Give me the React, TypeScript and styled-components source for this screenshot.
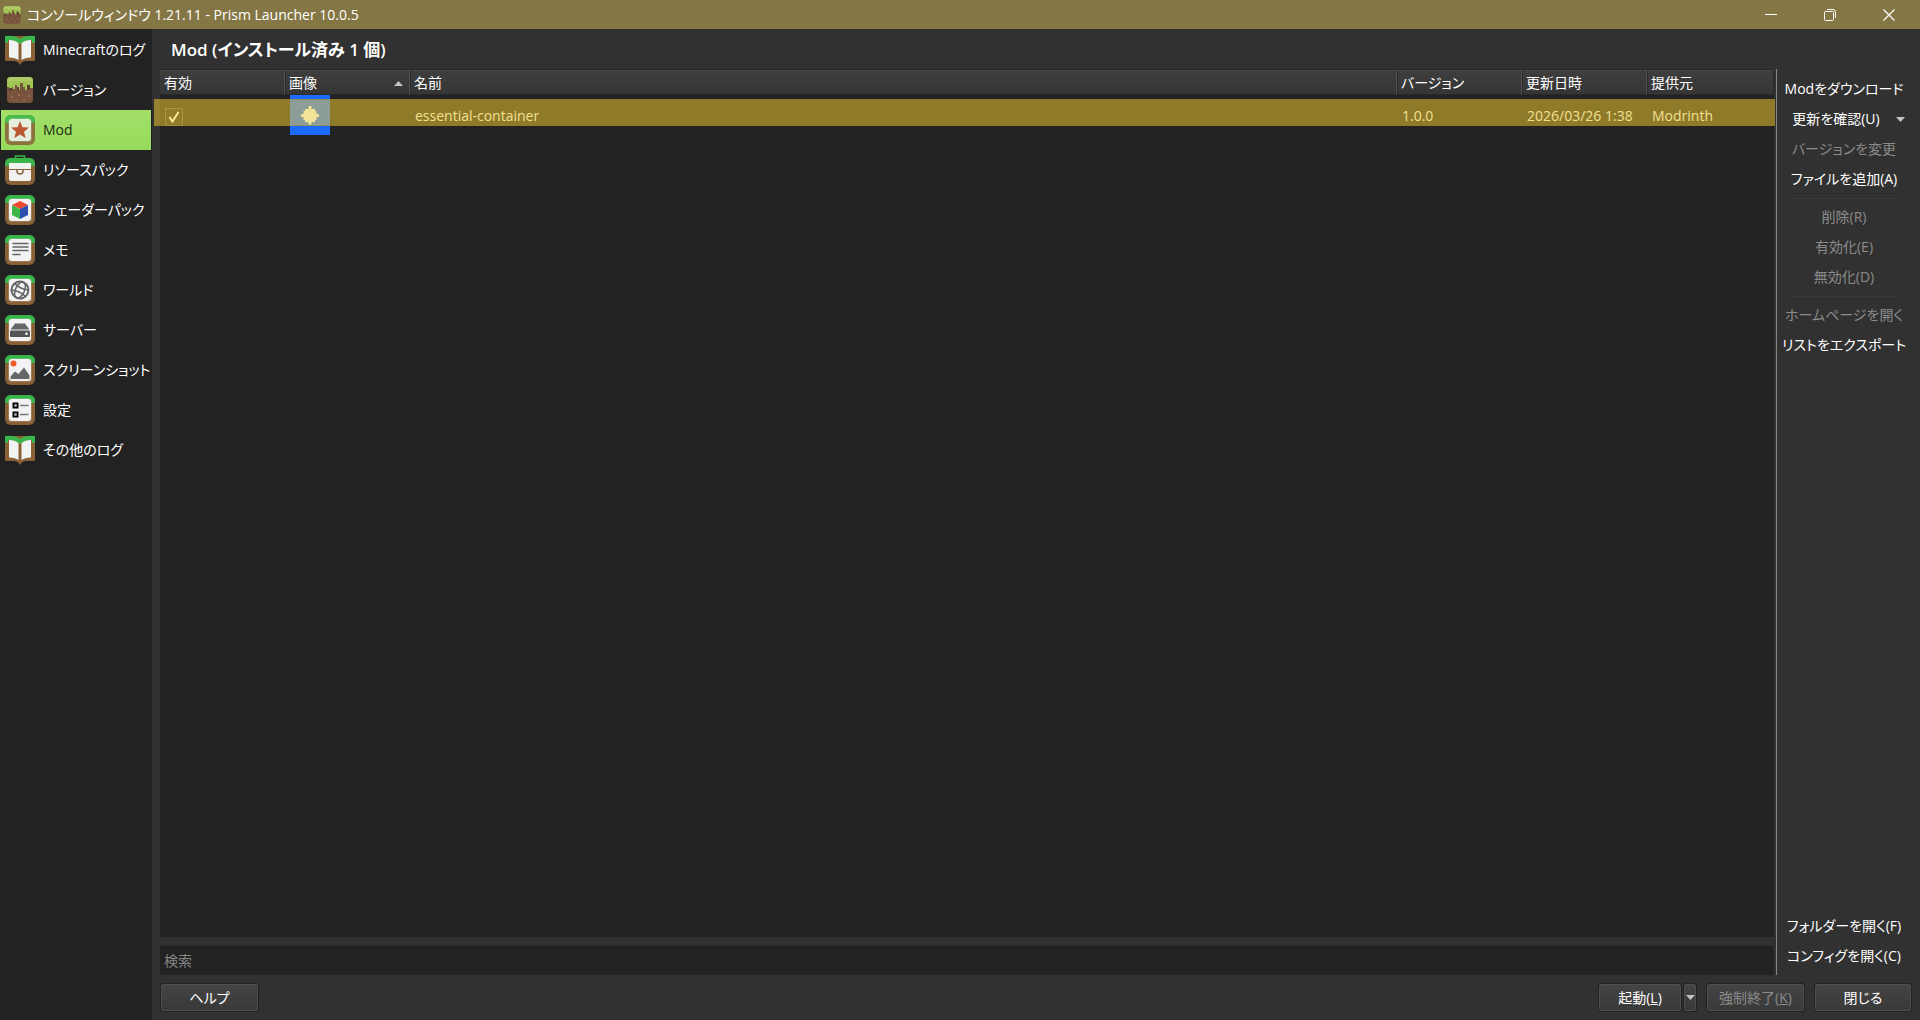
import React from "react";
import styled, { createGlobalStyle, css } from "styled-components";

const Global = createGlobalStyle`
  * { box-sizing: border-box; }
  body {
    margin: 0;
    background: #313131;
    color: #fff;
    font-family: "Open Sans", "Noto Sans CJK JP", sans-serif;
    font-size: 14px;
    line-height: 20px;
    font-feature-settings: "palt";
  }
  button, input { font: inherit; font-feature-settings: inherit; color: inherit; }
`;

const Window = styled.div`
  display: flex;
  flex-direction: column;
  min-height: 100vh;
`;

const TitleBar = styled.header`
  display: flex;
  align-items: center;
  gap: 5px;
  height: 29px;
  padding: 0 2px;
  background: #857745;
`;

const WindowTitle = styled.div`
  flex: 1;
  white-space: nowrap;
`;

const WindowButton = styled.button`
  display: grid;
  place-items: center;
  width: 59px;
  height: 29px;
  padding: 0;
  border: 0;
  background: none;
`;

const WindowButtons = styled.div`
  display: flex;
`;

const Body = styled.div`
  flex: 1;
  display: flex;
`;

const Sidebar = styled.nav`
  width: 152px;
  flex: none;
  padding: 1px;
  background: #222;
`;

const PageList = styled.ul`
  margin: 0;
  padding: 0;
  list-style: none;
`;

const PageLink = styled.a<{ $active: boolean }>`
  display: flex;
  align-items: center;
  gap: 8px;
  height: 40px;
  padding-left: 4px;
  color: #fff;
  text-decoration: none;
  white-space: nowrap;
  ${(p) =>
    p.$active &&
    css`
      background: linear-gradient(#a2df68, #97db5d);
      color: #1f2a12;
      svg { opacity: 0.85; }
    `}
`;

const Content = styled.main`
  flex: 1;
  min-width: 0;
  display: flex;
  flex-direction: column;
  padding-left: 8px;
`;

const PageTitle = styled.h1`
  margin: 0;
  padding: 9px 11px 7px;
  font-size: 17px;
  line-height: 24px;
  font-weight: 600;
`;

const Panels = styled.div`
  flex: 1;
  display: flex;
  gap: 2px;
`;

const ModPane = styled.section`
  flex: 1;
  min-width: 0;
  display: flex;
  flex-direction: column;
  gap: 8px;
`;

const TreeView = styled.div`
  flex: 1;
  background: #222;
`;

const ModTable = styled.table`
  width: 100%;
  table-layout: fixed;
  border-collapse: separate;
  border-spacing: 0;
`;

const Column = styled.col<{ $width?: number }>`
  width: ${(p) => (p.$width ? `${p.$width}px` : "auto")};
`;

const HeadCell = styled.th`
  height: 26px;
  padding: 2px 6px 0 4px;
  border-top: 1px solid #262626;
  border-right: 1px solid #505050;
  border-bottom: 1px solid #2a2a2a;
  background: linear-gradient(#4a4a4a 1px, #3e3e3e 1px, #353535);
  font-weight: 400;
  text-align: left;
  white-space: nowrap;
  & + & { box-shadow: inset 1px 0 #2b2b2b; }
  &:last-child { border-right-color: #2a2a2a; }
`;

const HeadContent = styled.div`
  display: flex;
  align-items: center;
  justify-content: space-between;
`;

const ModRow = styled.tr`
  position: relative;
  color: #e8eeee;
`;

const Cell = styled.td`
  height: 40px;
  padding: 1px 0 0 5px;
  white-space: nowrap;
`;

const CheckCell = styled(Cell)`
  &::after {
    content: "";
    position: absolute;
    inset: 4px -1px 9px -6px;
    background: rgba(252, 210, 48, 0.5);
    box-shadow: inset 0 0 0 1px rgba(150, 120, 30, 0.4);
    pointer-events: none;
  }
`;

const ImageCell = styled(Cell)`
  padding-top: 0;
  svg { display: block; }
`;

const CheckField = styled.label`
  display: inline-grid;
  place-items: center;
  vertical-align: middle;
  & > * { grid-area: 1 / 1; }
`;

const CheckBox = styled.input`
  appearance: none;
  width: 18px;
  height: 18px;
  margin: 0;
  border: 1px solid #5c5c5c;
  background: #272727;
`;

const SearchBox = styled.input`
  height: 30px;
  padding: 0 4px;
  border: 0;
  border-top: 1px solid #2a2a2a;
  border-radius: 3px;
  background: #222;
  outline: none;
  &::placeholder { color: #858585; opacity: 1; }
`;

const Toolbar = styled.aside`
  width: 144px;
  flex: none;
  display: flex;
  flex-direction: column;
  padding: 5px 12px 4px 3px;
  border-left: 1px solid #858585;
`;

const ToolGroup = styled.div`
  display: flex;
  flex-direction: column;
  &:not(:first-child) {
    margin-top: 4px;
    padding-top: 4px;
    background: linear-gradient(#3a3a3a, #3a3a3a) center top / 112px 1px no-repeat;
  }
  &:last-child {
    margin-top: auto;
    background: none;
  }
`;

const ToolButton = styled.button`
  height: 30px;
  padding: 0;
  border: 0;
  background: none;
  white-space: nowrap;
  &:disabled { color: #8b8b8b; }
`;

const ToolLine = styled.div`
  display: flex;
  ${ToolButton} { flex: 1; }
`;

const ToolMenu = styled.button`
  display: grid;
  place-items: center;
  width: 16px;
  padding: 0;
  border: 0;
  background: none;
`;

const Footer = styled.footer`
  display: flex;
  align-items: center;
  gap: 9px;
  padding: 8px 8px 8px 0;
`;

const PushButton = styled.button<{ $width: number }>`
  display: inline-flex;
  align-items: center;
  justify-content: center;
  width: ${(p) => p.$width}px;
  height: 29px;
  padding: 0;
  border: 1px solid #222;
  border-radius: 3px;
  background: linear-gradient(#444, #393939);
  box-shadow: inset 0 0 0 1px #4e4e4e;
  &:disabled { color: #8b8b8b; }
`;

const SplitButton = styled.div`
  display: flex;
  margin-left: auto;
  gap: 1px;
`;

const Arrow = ({ up }: { up?: boolean }) => (
  <svg width="9" height="5" viewBox="0 0 9 5">
    <path d={up ? "M0 5L4.500 0L9 5Z" : "M0 0H9L4.500 5Z"} fill="#c4c4c4" />
  </svg>
);

const GrassBlock = ({ size }: { size: number }) => (
  <svg width={size} height={size} viewBox="0 0 30 30">
    <rect x="2" y="2" width="26" height="26" rx="4" fill="#79533d" />
    <path d="M2 6q0-4 4-4h18q4 0 4 4v7h-3v-3h-3v5h-2v-3h-2v-4h-3v7h-3v-5h-2v4h-2v-2H7v3H4v-3H2z" fill="#9fc653" />
    <path d="M2 6q0-4 4-4h18q4 0 4 4z" fill="#b1ca67" />
    <path d="M4 13h3v3H4zM12 12h2v4h-2zM22 10h3v5h-3z" fill="#594132" />
    <path d="M6 21h2v2H6zM13 19h2v2h-2zM18 24h2v2h-2zM23 20h2v2h-2zM10 25h2v1h-2z" fill="#936b50" />
  </svg>
);

const BookIcon = () => (
  <svg width="30" height="30" viewBox="0 0 30 30">
    <path d="M0 1h30v25h-9q-4 0-6 4-2-4-6-4H0z" fill="#8a6036" />
    <path d="M0 1q10-1 15 3 5-4 15-3v7h-3V5q-7 0-12 4Q10 5 3 5v3H0z" fill="#39b54a" />
    <path d="M4 5q6 0 9.500 3v17Q10 22.500 4 22.500zM26 5q-6 0-9.500 3v17q3.500-2.500 9.500-2.500z" fill="#f2f2f2" />
  </svg>
);

const Framed = ({ children }: { children: React.ReactNode }) => (
  <svg width="30" height="30" viewBox="0 0 30 30">
    <rect width="30" height="30" rx="6" fill="#8a6036" />
    <path d="M0 8V6q0-6 6-6h18q6 0 6 6v2h-3V5H3v3z" fill="#39b54a" />
    <rect x="3" y="3" width="24" height="24" rx="4" fill="#64bd70" />
    <path d="M3 8h24v15q0 4-4 4H7q-4 0-4-4z" fill="#9c7856" />
    <rect x="4" y="4" width="22" height="22" rx="3" fill="#f2f2f2" />
    {children}
  </svg>
);

const StarIcon = () => (
  <Framed>
    <path d="M15 6l2.500 6.200 6.500.4-5 4.200 1.700 6.400L15 19.600l-5.700 3.600L11 16.800l-5-4.200 6.500-.4z" fill="#c1432c" />
  </Framed>
);

const ChestIcon = () => (
  <svg width="30" height="30" viewBox="0 0 30 30">
    <path d="M10.500 4V1h9v3" fill="none" stroke="#39b54a" strokeWidth="1.500" />
    <rect y="3" width="30" height="27" rx="6" fill="#8a6036" />
    <path d="M0 9q0-6 6-6h18q6 0 6 6v2H0z" fill="#39b54a" />
    <path d="M4 8h22v6H4zM4 15h22v9q0 2-2 2H6q-2 0-2-2z" fill="#f2f2f2" />
    <path d="M12 14.500v1.500q0 3 3 3t3-3v-1.500" fill="none" stroke="#8a6036" strokeWidth="1.500" />
  </svg>
);

const CubeIcon = () => (
  <Framed>
    <path d="M15 6l8 4-8 4-8-4z" fill="#ef4a2f" />
    <path d="M7 10l8 4v10l-8-4z" fill="#3cb648" />
    <path d="M23 10l-8 4v10l8-4z" fill="#2b4fae" />
  </Framed>
);

const NoteIcon = () => (
  <Framed>
    <path d="M8 8.500h15M8 12h15M8 15.500h15M8 19.500h7" stroke="#666" strokeWidth="1.500" strokeLinecap="round" />
  </Framed>
);

const GlobeIcon = () => (
  <Framed>
    <g fill="none" stroke="#666" strokeWidth="1.500" transform="rotate(25 15 15)">
      <circle cx="15" cy="15" r="8.500" strokeWidth="2" />
      <ellipse cx="15" cy="15" rx="4.500" ry="8.500" />
      <path d="M7.500 11.500q7.500 2.500 15 0M7.500 18.500q7.500-2.500 15 0" />
    </g>
  </Framed>
);

const ServerIcon = () => (
  <Framed>
    <path d="M10 8.500h10l4.500 6h-19z" fill="#666" />
    <rect x="5" y="15.500" width="20" height="6.500" rx="1" fill="#555" />
    <circle cx="21.500" cy="18.700" r="1.300" fill="#fff" />
  </Framed>
);

const PictureIcon = () => (
  <Framed>
    <circle cx="8.500" cy="8.500" r="3" fill="#f15a29" />
    <path d="M5.500 24v-2.500l4.500-5 3.500 2.500L19 12.500l5.500 8V24z" fill="#666" />
  </Framed>
);

const SettingsIcon = () => (
  <Framed>
    <path d="M8.500 8.500h4v4h-4zM8.500 17.500h4v4h-4z" fill="#fff" stroke="#000" strokeWidth="2" />
    <path d="M9.500 9.500h2v2h-2zM9.500 18.500h2v2h-2z" fill="#aaa" />
    <path d="M15.500 10.500H23M15.500 19.500H23" stroke="#777" strokeWidth="1.500" strokeLinecap="round" />
  </Framed>
);

const EssentialIcon = () => (
  <svg width="40" height="40" viewBox="0 0 40 40">
    <rect width="40" height="40" fill="#1c6bff" />
    <path d="M18.500 11h3v3h3.500v2h1.500v3H29v3h-2.500v3H25v2h-3.500v2.500h-3V27H15v-2h-1.500v-3H11v-3h2.500v-3H15v-2h3.500z" fill="#e6f4ff" />
  </svg>
);

const pages: { label: string; icon: React.ReactNode }[] = [
  { label: "Minecraftのログ", icon: <BookIcon /> },
  { label: "バージョン", icon: <GrassBlock size={30} /> },
  { label: "Mod", icon: <StarIcon /> },
  { label: "リソースパック", icon: <ChestIcon /> },
  { label: "シェーダーパック", icon: <CubeIcon /> },
  { label: "メモ", icon: <NoteIcon /> },
  { label: "ワールド", icon: <GlobeIcon /> },
  { label: "サーバー", icon: <ServerIcon /> },
  { label: "スクリーンショット", icon: <PictureIcon /> },
  { label: "設定", icon: <SettingsIcon /> },
  { label: "その他のログ", icon: <BookIcon /> },
];

export default function App() {
  return (
    <Window>
      <Global />
      <TitleBar>
        <GrassBlock size={20} />
        <WindowTitle>コンソールウィンドウ 1.21.11 - Prism Launcher 10.0.5</WindowTitle>
        <WindowButtons>
          <WindowButton aria-label="最小化">
            <svg width="12" height="12" viewBox="0 0 12 12"><path d="M0 5.500h12" stroke="#fff" /></svg>
          </WindowButton>
          <WindowButton aria-label="元に戻す">
            <svg width="12" height="12" viewBox="0 0 12 12" fill="none" stroke="#fff">
              <rect x=".5" y="2.500" width="9" height="9" rx="1" />
              <path d="M3 .5h6q2.500 0 2.500 2.500v6" />
            </svg>
          </WindowButton>
          <WindowButton aria-label="ウィンドウを閉じる">
            <svg width="12" height="12" viewBox="0 0 12 12"><path d="M.5.5l11 11M11.500.5l-11 11" stroke="#fff" strokeWidth="1.200" /></svg>
          </WindowButton>
        </WindowButtons>
      </TitleBar>
      <Body>
        <Sidebar>
          <PageList>
            {pages.map((p) => (
              <li key={p.label}>
                <PageLink href="#" $active={p.label === "Mod"}>
                  {p.icon}
                  {p.label}
                </PageLink>
              </li>
            ))}
          </PageList>
        </Sidebar>
        <Content>
          <PageTitle>Mod (インストール済み 1 個)</PageTitle>
          <Panels>
            <ModPane>
              <TreeView>
                <ModTable>
                  <colgroup>
                    <Column $width={125} />
                    <Column $width={125} />
                    <Column />
                    <Column $width={125} />
                    <Column $width={125} />
                    <Column $width={127} />
                  </colgroup>
                  <thead>
                    <tr>
                      <HeadCell>有効</HeadCell>
                      <HeadCell>
                        <HeadContent>画像<Arrow up /></HeadContent>
                      </HeadCell>
                      <HeadCell>名前</HeadCell>
                      <HeadCell>バージョン</HeadCell>
                      <HeadCell>更新日時</HeadCell>
                      <HeadCell>提供元</HeadCell>
                    </tr>
                  </thead>
                  <tbody>
                    <ModRow>
                      <CheckCell>
                        <CheckField>
                          <CheckBox type="checkbox" defaultChecked aria-label="essential-container" />
                          <svg width="12" height="12" viewBox="0 0 12 12">
                            <path d="M1.500 6l3 4.500L10.500 1" fill="none" stroke="#fff" strokeWidth="2" />
                          </svg>
                        </CheckField>
                      </CheckCell>
                      <ImageCell><EssentialIcon /></ImageCell>
                      <Cell>essential-container</Cell>
                      <Cell>1.0.0</Cell>
                      <Cell>2026/03/26 1:38</Cell>
                      <Cell>Modrinth</Cell>
                    </ModRow>
                  </tbody>
                </ModTable>
              </TreeView>
              <SearchBox type="text" placeholder="検索" aria-label="検索" />
            </ModPane>
            <Toolbar>
              <ToolGroup>
                <ToolButton>Modをダウンロード</ToolButton>
                <ToolLine>
                  <ToolButton>更新を確認(U)</ToolButton>
                  <ToolMenu aria-label="更新メニュー"><Arrow /></ToolMenu>
                </ToolLine>
                <ToolButton disabled>バージョンを変更</ToolButton>
                <ToolButton>ファイルを追加(A)</ToolButton>
              </ToolGroup>
              <ToolGroup>
                <ToolButton disabled>削除(R)</ToolButton>
                <ToolButton disabled>有効化(E)</ToolButton>
                <ToolButton disabled>無効化(D)</ToolButton>
              </ToolGroup>
              <ToolGroup>
                <ToolButton disabled>ホームページを開く</ToolButton>
                <ToolButton>リストをエクスポート</ToolButton>
              </ToolGroup>
              <ToolGroup>
                <ToolButton>フォルダーを開く(F)</ToolButton>
                <ToolButton>コンフィグを開く(C)</ToolButton>
              </ToolGroup>
            </Toolbar>
          </Panels>
          <Footer>
            <PushButton $width={99}>ヘルプ</PushButton>
            <SplitButton>
              <PushButton $width={84}>起動(<u>L</u>)</PushButton>
              <PushButton $width={14} aria-label="起動メニュー"><Arrow /></PushButton>
            </SplitButton>
            <PushButton $width={99} disabled>強制終了(<u>K</u>)</PushButton>
            <PushButton $width={98}>閉じる</PushButton>
          </Footer>
        </Content>
      </Body>
    </Window>
  );
}
